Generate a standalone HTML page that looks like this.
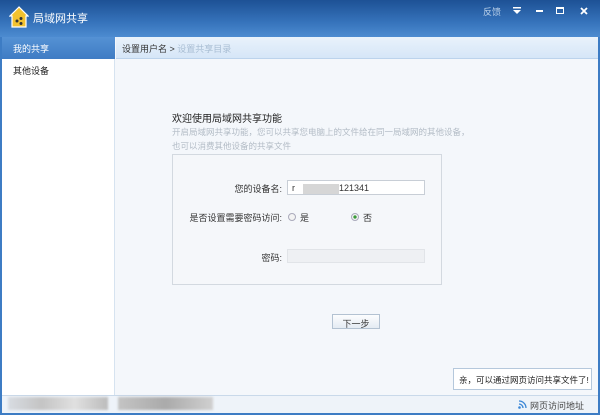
<!DOCTYPE html>
<html><head><meta charset="utf-8"><style>
*{margin:0;padding:0;box-sizing:border-box}
body{width:600px;height:415px;overflow:hidden;font-family:"Liberation Sans","Noto Sans CJK SC",sans-serif;font-size:9px;color:#333;background:#3d7cc4;position:relative}
.abs{position:absolute;white-space:nowrap}
#title{left:0;top:0;width:600px;height:37px;background:linear-gradient(#1d5195,#3673bb 60%,#4c8bd0)}
#win{left:2px;top:37px;width:596px;height:376px;background:#f4f7fb}
#side{left:2px;top:37px;width:113px;height:358px;background:#fff;border-right:1px solid #d6e3f0}
#sel{left:2px;top:37px;width:113px;height:22px;background:linear-gradient(#5592d4,#3f7cc4);color:#fff;padding:5px 0 0 11px}
#crumb{left:116px;top:37px;width:482px;height:22px;background:linear-gradient(#e9f2fb,#d6e6f7);border-bottom:1px solid #bcd3ec;padding:5px 0 0 6px}
#box{left:172px;top:154px;width:270px;height:131px;border:1px solid #d3d9e0;background:#f5f7fa}
.inp{border:1px solid #c8ced6;background:#fff}
.radio{width:8px;height:8px;border-radius:50%;border:1px solid #aab;background:#f3f3f3}
#status{left:2px;top:395px;width:596px;height:18px;background:#eef3f9;border-top:1px solid #c9d9ea}
</style></head><body>
<div id="title" class="abs"></div>
<svg class="abs" style="left:9px;top:6px" width="20" height="22" viewBox="0 0 20 22"><path d="M10 1 L1 10 L3 10 L3 21 L17 21 L17 10 L19 10 Z" fill="#f2c230" stroke="#fff" stroke-width="1.2"/><circle cx="8" cy="15" r="1.5" fill="#333"/><circle cx="12" cy="12.5" r="1.5" fill="#333"/><circle cx="12" cy="17.5" r="1.5" fill="#333"/></svg>
<div class="abs" style="left:33px;top:10px;color:#fff;font-size:11px">局域网共享</div>
<div class="abs" style="left:483px;top:5px;color:#bcd2ea;font-size:9px">反馈</div>
<svg class="abs" style="left:513px;top:7px" width="8" height="8" viewBox="0 0 8 8"><rect x="0" y="0" width="8" height="1.5" fill="#fff"/><path d="M0 3 L8 3 L4 7 Z" fill="#fff"/></svg>
<div class="abs" style="left:536px;top:10px;width:7px;height:2px;background:#fff"></div>
<div class="abs" style="left:556px;top:7px;width:8px;height:7px;border:1px solid #fff;border-top-width:2px"></div>
<svg class="abs" style="left:580px;top:7px" width="8" height="8" viewBox="0 0 8 8"><path d="M1 1 L7 7 M7 1 L1 7" stroke="#fff" stroke-width="1.8"/></svg>
<div id="win" class="abs"></div>
<div id="side" class="abs"></div>
<div id="sel" class="abs">我的共享</div>
<div class="abs" style="left:13px;top:64px;color:#222">其他设备</div>
<div id="crumb" class="abs">设置用户名 &gt; <span style="color:#a8bdd3">设置共享目录</span></div>
<div class="abs" style="left:172px;top:110px;font-size:10px;color:#222">欢迎使用局域网共享功能</div>
<div class="abs" style="left:172px;top:126px;color:#b3bcc6;font-size:8.5px">开启局域网共享功能，您可以共享您电脑上的文件给在同一局域网的其他设备，</div>
<div class="abs" style="left:172px;top:140px;color:#b3bcc6;font-size:8.5px">也可以消费其他设备的共享文件</div>
<div id="box" class="abs"></div>
<div class="abs" style="left:230px;top:182px;width:52px;text-align:right">您的设备名:</div>
<div class="abs inp" style="left:287px;top:180px;width:138px;height:15px;padding:2px 0 0 4px">r<span style="display:inline-block;width:36px;height:10px;background:#d6d6d6;vertical-align:middle;margin:0 0 0 8px"></span>121341</div>
<div class="abs" style="left:182px;top:211px;width:100px;text-align:right">是否设置需要密码访问:</div>
<div class="abs radio" style="left:288px;top:213px"></div>
<div class="abs" style="left:300px;top:211px">是</div>
<div class="abs radio" style="left:351px;top:213px;background:radial-gradient(#3a9a3a 35%,#f3f3f3 45%)"></div>
<div class="abs" style="left:363px;top:211px">否</div>
<div class="abs" style="left:230px;top:251px;width:52px;text-align:right">密码:</div>
<div class="abs" style="left:287px;top:249px;width:138px;height:14px;background:#eef0f3;border:1px solid #e1e4e8"></div>
<div class="abs" style="left:332px;top:314px;width:48px;height:15px;border:1px solid #b3c2d2;background:linear-gradient(#fcfdfe,#e4ebf3);text-align:center;padding-top:2px">下一步</div>
<div class="abs" style="left:453px;top:368px;width:139px;height:22px;background:#fff;border:1px solid #b5c8dc;padding:5px 0 0 5px;color:#222;font-size:8.5px">亲，可以通过网页访问共享文件了!</div>
<div id="status" class="abs"></div>
<div class="abs" style="left:8px;top:397px;width:100px;height:13px;background:linear-gradient(90deg,#d8dce2,#c4c4c4,#e0e0e0,#bcbcbc);filter:blur(1px)"></div>
<div class="abs" style="left:118px;top:397px;width:95px;height:13px;background:linear-gradient(90deg,#c4c4c4,#aaa,#d0d0d0);filter:blur(1px)"></div>
<svg class="abs" style="left:518px;top:400px" width="9" height="9" viewBox="0 0 9 9"><circle cx="1.5" cy="7.5" r="1.3" fill="#3a86d6"/><path d="M1 4 A4 4 0 0 1 5 8 M1 1 A7 7 0 0 1 8 8" stroke="#3a86d6" stroke-width="1.3" fill="none"/></svg>
<div class="abs" style="left:530px;top:399px;color:#444;font-size:9px">网页访问地址</div>
</body></html>
